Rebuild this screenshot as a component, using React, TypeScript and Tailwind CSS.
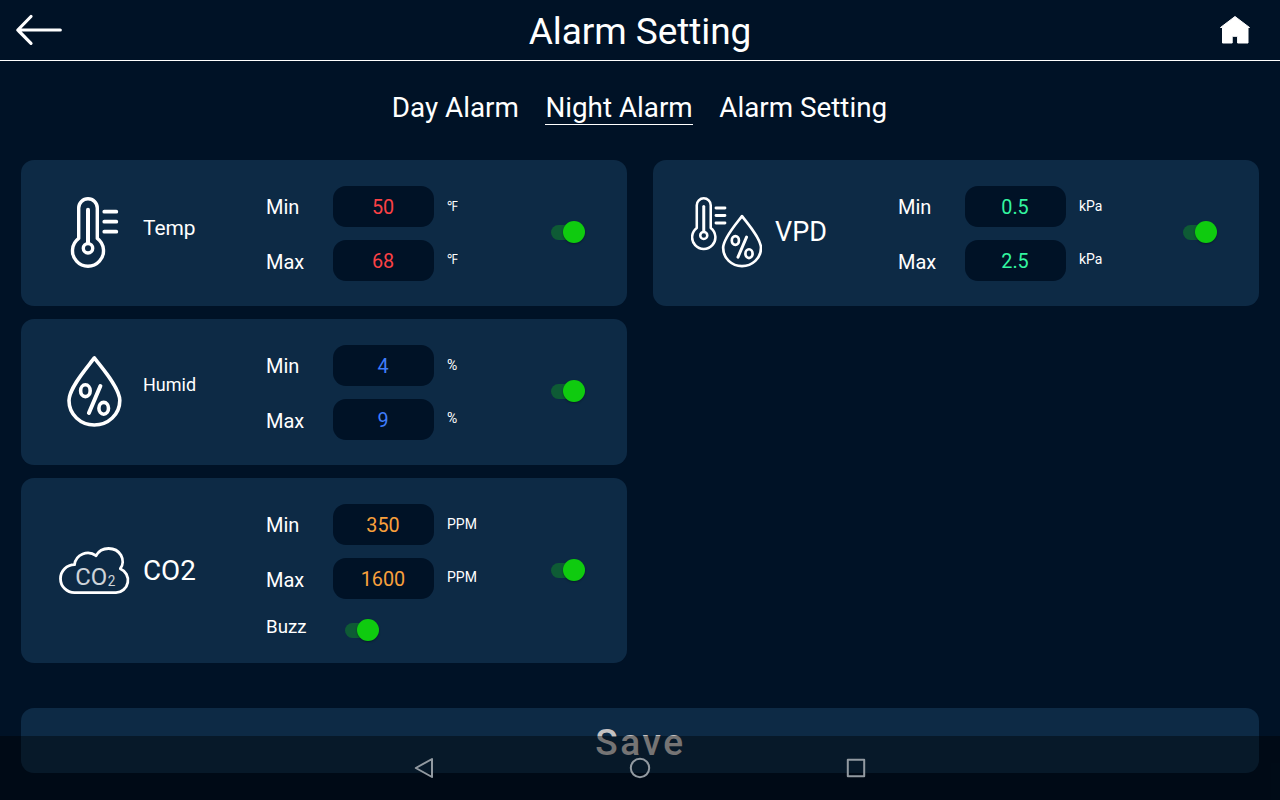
import { useState, type ReactNode } from "react";

function ThermometerShape() {
  return (
    <g fill="none" stroke="currentColor" strokeWidth="3.4" strokeLinecap="round" strokeLinejoin="round">
      <path d="M19.7 41.4V11a9.3 9.3 0 0 1 18.6 0V41.4A15.5 15.5 0 1 1 19.7 41.4Z" />
      <path d="M29 12.8V45.5" strokeWidth="4" />
      <circle cx="29" cy="51.3" r="4.7" />
      <path d="M45.3 14.7H57.3M45.3 24.7H57.3M45.3 34.7H57.3" strokeWidth="3.8" />
    </g>
  );
}

function DropShape() {
  return (
    <g fill="none" stroke="currentColor" strokeWidth="3.6" strokeLinecap="round" strokeLinejoin="round">
      <path d="M35.3 1.9C29 10.5 10 31.5 10 44.5C10 58.5 21.5 69 35.3 69S60.8 58.5 60.8 44.5C60.8 31.5 41.6 10.5 35.3 1.9Z" />
      <ellipse cx="26.4" cy="34.7" rx="4.8" ry="5.9" />
      <ellipse cx="44.7" cy="52.3" rx="4.8" ry="5.9" />
      <path d="M41.4 30L29.9 57" strokeWidth="4" />
    </g>
  );
}

function TempIcon() {
  return (
    <svg width="71" height="71" viewBox="0 0 71 71">
      <ThermometerShape />
    </svg>
  );
}

function HumidIcon() {
  return (
    <svg width="71" height="71" viewBox="0 0 71 71">
      <DropShape />
    </svg>
  );
}

function VpdIcon() {
  return (
    <svg width="71" height="71" viewBox="0 0 71 71">
      <g transform="translate(-9 0) scale(.75)">
        <ThermometerShape />
      </g>
      <g transform="translate(24.7 17.7) scale(.745)">
        <DropShape />
      </g>
    </svg>
  );
}

function Co2Icon() {
  return (
    <svg width="71" height="48" viewBox="0 0 71 48" fill="currentColor">
      <path
        d="M15.5 17.7A14 14 0 0 0 15.5 45.7H57A12.5 12.5 0 0 0 61.3 21.7C64.2 18 64.4 12.5 62 8.2C59.5 4 54.6 1.5 49.6 1.5C44.2 1.5 39.5 4.2 37 8.7A13.5 13.5 0 0 0 15.5 17.7Z"
        fill="none"
        stroke="currentColor"
        strokeWidth="2.8"
        strokeLinejoin="round"
      />
      <text x="16.3" y="38.4" fontSize="24.5" textLength="32" lengthAdjust="spacingAndGlyphs" opacity=".8">
        CO
      </text>
      <text x="48.8" y="38.7" fontSize="14.5" textLength="7.6" lengthAdjust="spacingAndGlyphs" opacity=".8">
        2
      </text>
    </svg>
  );
}

function Toggle() {
  const [on, setOn] = useState(true);
  return (
    <button
      role="switch"
      aria-checked={on}
      onClick={() => setOn(!on)}
      className="grid h-[22px] w-[34.4px] items-center"
    >
      <span className="col-start-1 row-start-1 h-[15px] w-[32px] rounded-full bg-[#0e5b35]" />
      <span
        className={`col-start-1 row-start-1 size-[22px] rounded-full bg-[#0fcb0f] shadow-[0_1px_2px_rgba(0,0,0,0.35)] ${on ? "justify-self-end" : "justify-self-start"}`}
      />
    </button>
  );
}

type CardProps = {
  icon: ReactNode;
  label: string;
  labelClass: string;
  min: string;
  max: string;
  unit: string;
  unitClass?: string;
  color: string;
  buzz?: boolean;
};

function AlarmCard({ icon, label, labelClass, min, max, unit, unitClass = "", color, buzz }: CardProps) {
  return (
    <section className={`flex w-[606px] rounded-[13px] bg-[#0d2a45] pl-[38px] ${buzz ? "h-[185px]" : "h-[146px]"}`}>
      <div className={`flex w-[84px] items-center ${buzz ? "" : "pb-[1px]"}`}>{icon}</div>
      <div className={`flex w-[123px] items-center ${labelClass}`}>{label}</div>
      <div className="flex w-[67px] flex-col pt-[32px] text-[20px] leading-[30px]">
        <span>Min</span>
        <span className="mt-[25px]">Max</span>
        {buzz && <span className="mt-[17px] text-[18.7px]">Buzz</span>}
      </div>
      <div className="flex w-[114px] flex-col gap-[13px] pt-[26px]">
        {[min, max].map((value, i) => (
          <div key={i} className={`flex h-[41px] w-[101px] items-center justify-center rounded-[13px] bg-[#001226] pt-[3px] pr-[1px] text-[19.8px] leading-[30px] ${color}`}>
            {value}
          </div>
        ))}
        {buzz && (
          <div className="mt-[7px] ml-[12px]">
            <Toggle />
          </div>
        )}
      </div>
      <div className="flex w-[104px] flex-col items-start gap-[33px] pt-[36px] text-[14px] leading-[20px]">
        <span className={unitClass}>{unit}</span>
        <span className={unitClass}>{unit}</span>
      </div>
      <div className={`flex items-center ${buzz ? "pb-[1px]" : "pb-[2px]"}`}>
        <Toggle />
      </div>
    </section>
  );
}

function Header() {
  return (
    <header className="grid h-[61px] grid-cols-[48px_1fr_48px] items-center border-b border-white px-[15px]">
      <button aria-label="Back">
        <svg width="48" height="32" viewBox="0 0 48 32" fill="none" stroke="currentColor" strokeWidth="3.2" strokeLinecap="round" strokeLinejoin="round">
          <path d="M16 2.5L2.8 16L16 29.3M2.8 16H45.3" />
        </svg>
      </button>
      <h1 className="pt-[4px] text-center text-[37px] leading-[44px] tracking-[-0.06px]">Alarm Setting</h1>
      <div className="flex justify-end pr-[14px]">
        <button aria-label="Home">
          <svg width="32" height="30" viewBox="0 0 32 30" fill="currentColor" stroke="currentColor" strokeLinejoin="round">
            <path d="M16 1.5L30.5 12.5H29V28H18.6V21.3H13.2V28H3.5V12.5H1.5Z" />
          </svg>
        </button>
      </div>
    </header>
  );
}

const tabs = ["Day Alarm", "Night Alarm", "Alarm Setting"];

export default function App() {
  const [tab, setTab] = useState(1);
  return (
    <div className="relative flex h-[800px] w-[1280px] flex-col overflow-hidden bg-[#001226] font-['Roboto',sans-serif] text-white">
      <Header />
      <nav className="mt-[30px] flex justify-center gap-[26.6px] pr-[1px]">
        {tabs.map((name, i) => (
          <button
            key={name}
            onClick={() => setTab(i)}
            className={`border-b text-[27.8px] leading-[33px] ${i === tab ? "border-white" : "border-transparent"}`}
          >
            {name}
          </button>
        ))}
      </nav>
      <main className="mt-[35px] flex h-[503px] gap-[26px] px-[21px]">
        <div className="flex flex-col gap-[13px]">
          <AlarmCard icon={<TempIcon />} label="Temp" labelClass="text-[20.9px] pb-[8px]" min="50" max="68" unit="℉" unitClass="origin-left scale-x-[0.88] font-medium" color="text-[#fb4145]" />
          <AlarmCard icon={<HumidIcon />} label="Humid" labelClass="text-[18px] pb-[16px]" min="4" max="9" unit="%" color="text-[#3f7dfb]" />
          <AlarmCard icon={<Co2Icon />} label="CO2" labelClass="text-[27.8px]" min="350" max="1600" unit="PPM" color="text-[#f9a03c]" buzz />
        </div>
        <div>
          <AlarmCard icon={<VpdIcon />} label="VPD" labelClass="text-[27px] pb-[2px]" min="0.5" max="2.5" unit="kPa" color="text-[#33f5a0]" />
        </div>
      </main>
      <button className="mx-[21px] mt-[45px] flex h-[65px] items-center justify-center rounded-[13px] bg-[#0d2a45] pt-[4px] pl-[1px] text-[37px] font-medium tracking-[2.6px] text-[#c4c1c1]">
        Save
      </button>
      <div className="absolute inset-x-0 bottom-0 flex h-[64px] items-center justify-center gap-[192px] bg-black/40 text-[#929aa1]">
        <svg width="24" height="24" viewBox="0 0 24 24" fill="none" stroke="currentColor" strokeWidth="2" strokeLinejoin="round">
          <path d="M20 3L3.8 12L20 21Z" />
        </svg>
        <svg width="24" height="24" viewBox="0 0 24 24" fill="none" stroke="currentColor" strokeWidth="2">
          <circle cx="12" cy="12" r="9.2" />
        </svg>
        <svg width="24" height="24" viewBox="0 0 24 24" fill="none" stroke="currentColor" strokeWidth="2" strokeLinejoin="round">
          <path d="M3.8 3.8H20.2V20.2H3.8Z" />
        </svg>
      </div>
    </div>
  );
}
